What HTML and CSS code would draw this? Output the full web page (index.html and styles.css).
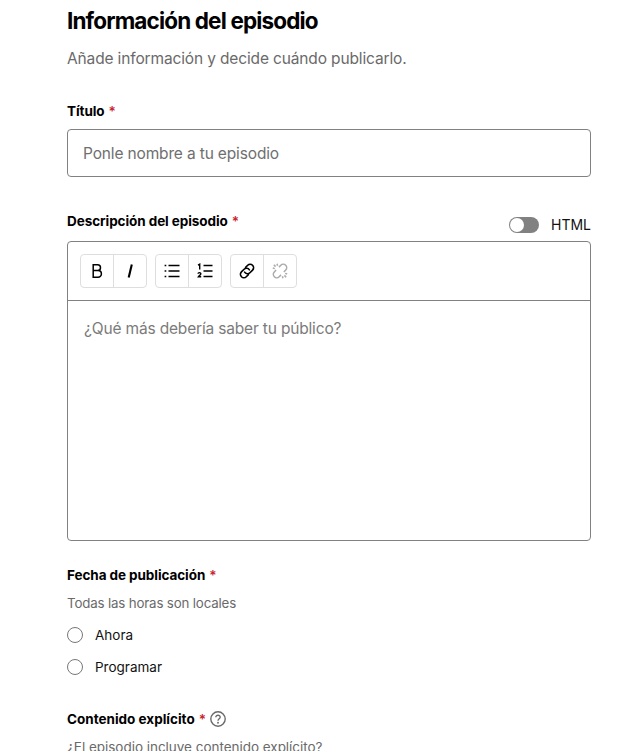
FILE: index.html
```
<!DOCTYPE html>
<html lang="es">
<head>
<meta charset="utf-8">
<title>Información del episodio</title>
<link rel="stylesheet" href="styles.css">
</head>
<body>
<main class="form">
  <h1 class="title">Información del episodio</h1>
  <p class="subtitle">Añade información y decide cuándo publicarlo.</p>

  <label class="label label-name" for="name">Título<span class="req">*</span></label>
  <input class="input" id="name" type="text" placeholder="Ponle nombre a tu episodio">

  <div class="row">
    <div class="label">Descripción del episodio<span class="req">*</span></div>
    <div class="toggle"><span class="switch"></span><span class="toggle-text">HTML</span></div>
  </div>
  <div class="editor">
    <div class="toolbar">
      <div class="group">
        <button class="tool" aria-label="Negrita"><svg width="16" height="16" viewBox="0 0 16 16"><path d="M4.200 1.800h4.400a2.800 2.800 0 0 1 0 5.800H4.200zM4.200 7.600h4.900a3.200 3.200 0 0 1 0 6.600H4.200z" fill="none" stroke="currentColor" stroke-width="1.500"/></svg></button>
        <button class="tool" aria-label="Cursiva"><svg width="16" height="16" viewBox="0 0 16 16"><path d="M9.800 1.400 6.700 14.600" fill="none" stroke="currentColor" stroke-width="2.100"/></svg></button>
      </div>
      <div class="group">
        <button class="tool" aria-label="Lista"><svg width="16" height="16" viewBox="0 0 16 16"><path d="M4.500 2.500h11M4.500 8h11M4.500 13.500h11" stroke="currentColor" stroke-width="1.500"/><path d="M.6 2.500h1.700M.6 8h1.700M.6 13.500h1.700" stroke="currentColor" stroke-width="1.600"/></svg></button>
        <button class="tool" aria-label="Lista numerada"><svg width="16" height="16" viewBox="0 0 16 16"><path d="M6.500 2.500h9M6.500 8h9M6.500 13.500h9" stroke="currentColor" stroke-width="1.500"/><path d="M1 2.200 2.700 1.200V6.500M1 10.800c.1-1.600 3-1.500 2.800.1-.1 1.100-1.800 1.700-2.500 2.900h2.900" fill="none" stroke="currentColor" stroke-width="1.400"/></svg></button>
      </div>
      <div class="group">
        <button class="tool" aria-label="Enlace"><svg width="16" height="16" viewBox="0 0 16 16"><g fill="none" stroke="currentColor" stroke-width="1.600" stroke-linecap="round"><path d="M6.600 4.400 8.700 2.300a3.400 3.400 0 0 1 4.900 4.800l-2.700 2.700a3.400 3.400 0 0 1-5.300-.6"/><path d="M9.400 11.600 7.300 13.700a3.400 3.400 0 0 1-4.900-4.800l2.700-2.700a3.400 3.400 0 0 1 5.300.6"/></g></svg></button>
        <button class="tool off" aria-label="Quitar enlace"><svg width="16" height="16" viewBox="0 0 16 16"><g fill="none" stroke="currentColor" stroke-width="1.500"><path d="M7 4.100 8.800 2.300a3.400 3.400 0 0 1 4.900 4.800L11.900 9M9 11.900l-1.800 1.800a3.400 3.400 0 0 1-4.900-4.800L4.100 7"/><path d="M5 .8l.6 2M.8 5l2 .6M1.800 1.800l1.800 1.800M11 15.200l-.6-2M15.200 11l-2-.6M14.200 14.200l-1.800-1.800"/></g></svg></button>
      </div>
    </div>
    <div class="area">¿Qué más debería saber tu público?</div>
  </div>

  <div class="label label-date">Fecha de publicación<span class="req">*</span></div>
  <p class="hint hint-date">Todas las horas son locales</p>
  <label class="radio"><span class="dot"></span>Ahora</label>
  <label class="radio"><span class="dot"></span>Programar</label>

  <div class="label label-explicit">Contenido explícito<span class="req">*</span>
    <svg class="help" width="16" height="16" viewBox="0 0 16 16"><g fill="none" stroke="currentColor" stroke-width="1.400"><circle cx="8" cy="8" r="7.200"/><path d="M5.800 6.300c0-2.900 4.500-2.700 4.400-.1C10.100 7.700 8 7.800 8 9.700"/></g><circle cx="8" cy="11.700" r=".95" fill="currentColor"/></svg>
  </div>
  <p class="hint">¿El episodio incluye contenido explícito?</p>
</main>
</body>
</html>
```
FILE: styles.css
```
* { box-sizing: border-box; }
html, body { height: 100%; }
body {
  margin: 0;
  overflow: hidden;
  background: #fff;
  color: #121212;
  font-family: Inter, "Liberation Sans", sans-serif;
}
.form { width: 524px; margin-left: 67px; padding-top: 5px; white-space: nowrap; }
.title { margin: 0; font-size: 22.5px; line-height: 32px; font-weight: 700; letter-spacing: -0.85px; color: #000; }
.subtitle { margin: 10px 0 0; font-size: 15.5px; line-height: 24px; letter-spacing: -0.14px; color: #6a6a6a; }
.label { display: flex; align-items: center; height: 20px; font-size: 13.5px; font-weight: 700; letter-spacing: -0.07px; color: #000; }
.label-name { margin-top: 30px; }
.req { margin-left: 4px; color: #c9202d; font-weight: 600; }
.input {
  display: block;
  width: 100%;
  height: 48px;
  margin-top: 8px;
  padding: 0 15px;
  border: 1px solid #818181;
  border-radius: 4px;
  background: #fff;
  font: 15.5px/24px Inter, sans-serif;
  letter-spacing: -0.15px;
}
.input::placeholder { color: #6f6f6f; opacity: 1; }
.row { display: flex; justify-content: space-between; margin-top: 34px; height: 30px; }
.toggle { display: flex; align-items: center; gap: 12px; height: 28px; font-size: 14px; }
.toggle-text { line-height: 18px; }
.switch { width: 30px; height: 16px; padding: 1px; border-radius: 8px; background: #818181; }
.switch::before { content: ""; display: block; width: 14px; height: 14px; border-radius: 50%; background: #fff; }
.editor { height: 300px; border: 1px solid #818181; border-radius: 4px; }
.toolbar { display: flex; gap: 8px; height: 59px; padding: 12px; border-bottom: 1px solid #818181; }
.group { display: flex; height: 34px; border: 1px solid #dedede; border-radius: 4px; }
.tool { display: flex; align-items: center; justify-content: center; width: 32px; height: 32px; padding: 0; border: 0; background: none; color: #000; }
.tool + .tool { width: 33px; border-left: 1px solid #dedede; }
.tool.off { color: #aaa; }
.area { padding: 16px; font-size: 15.5px; line-height: 24px; letter-spacing: -0.17px; color: #7b7b7b; }
.label-date { margin-top: 24px; }
.hint { margin: 8px 0 0; font-size: 13.5px; line-height: 20px; letter-spacing: -0.03px; color: #6a6a6a; }
.hint-date { font-size: 13.3px; letter-spacing: -0.16px; }
.radio { display: flex; align-items: center; gap: 12px; height: 20px; margin-top: 12px; font-size: 13.5px; }
.dot { width: 16px; height: 16px; border: 1px solid #777; border-radius: 50%; }
.label-explicit { margin-top: 32px; letter-spacing: 0; }
.help { margin-left: 4px; color: #6a6a6a; }
```
